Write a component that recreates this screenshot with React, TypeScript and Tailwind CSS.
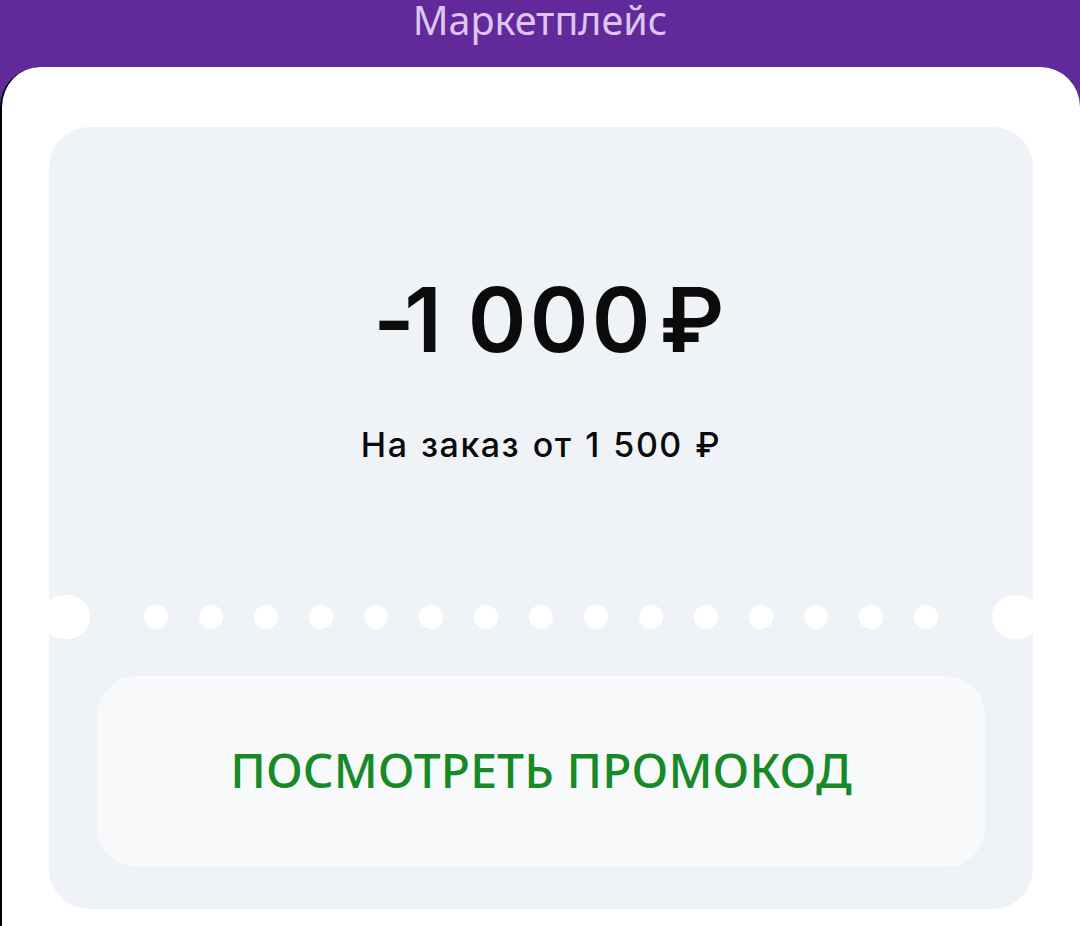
import React from "react";

const DOTS = Array.from({ length: 15 }, (_, i) => i);

const App = () => {
  return (
    <div className="w-[1080px] h-[926px] bg-[#62299a] flex flex-col overflow-hidden">
      <header className="h-[67px] flex justify-center shrink-0">
        <p
          className="pt-[1px] text-[39.5px] leading-[38px] text-[#dcc6f1]"
          style={{ fontFamily: '"Noto Sans", sans-serif' }}
        >
          Маркетплейс
        </p>
      </header>

      <main className="flex-1 bg-white rounded-t-[40px] border-l-2 border-black pt-[60px] pl-[47px] pr-[47px]">
        <div className="relative bg-[#eff3f8] rounded-[40px] flex flex-col">
          {/* top part */}
          <div
            className="h-[466px] flex flex-col items-center pt-[148px]"
            style={{ fontFamily: "Inter, sans-serif" }}
          >
            <p
              aria-label="-1 000 ₽"
              className="flex pl-[27px] text-[89px] leading-[90px] font-semibold text-[#0b0b0b]"
            >
              <span className="w-[34px] shrink-0 flex justify-center">-</span>
              <span className="w-[24px] shrink-0 flex justify-center">1</span>
              <span className="w-[31px] shrink-0" />
              <span className="w-[62px] shrink-0 flex justify-center">0</span>
              <span className="w-[62px] shrink-0 flex justify-center">0</span>
              <span className="w-[62px] shrink-0 flex justify-center">0</span>
              <span className="w-[80px] shrink-0 flex justify-center">₽</span>
            </p>
            <p className="mt-[63px] text-[34px] leading-[34px] font-medium text-[#0b0b0b] tracking-[1.5px] [word-spacing:2px]">
              На заказ от 1 500 ₽
            </p>
          </div>

          {/* perforation */}
          <div className="h-[48px] flex items-center justify-center gap-[31px]">
            {DOTS.map((d) => (
              <span key={d} className="w-[24px] h-[24px] rounded-full bg-white" />
            ))}
          </div>
          <span className="absolute left-[-7px] top-[468px] w-[48px] h-[44px] rounded-full bg-white" />
          <span className="absolute right-[-7px] top-[468px] w-[48px] h-[44px] rounded-full bg-white" />

          {/* bottom part */}
          <div className="pt-[35px] pb-[42px] px-[48px]">
            <button className="w-full h-[191px] rounded-[40px] bg-[#f7f9fb] flex items-center justify-center pb-[4px]">
              <span
                className="text-[48px] leading-[49px] font-medium text-[#178a28] tracking-[0.1px]"
                style={{ fontFamily: '"Noto Sans", sans-serif' }}
              >
                ПОСМОТРЕТЬ ПРОМОКОД
              </span>
            </button>
          </div>
        </div>
      </main>
    </div>
  );
};

export default App;
